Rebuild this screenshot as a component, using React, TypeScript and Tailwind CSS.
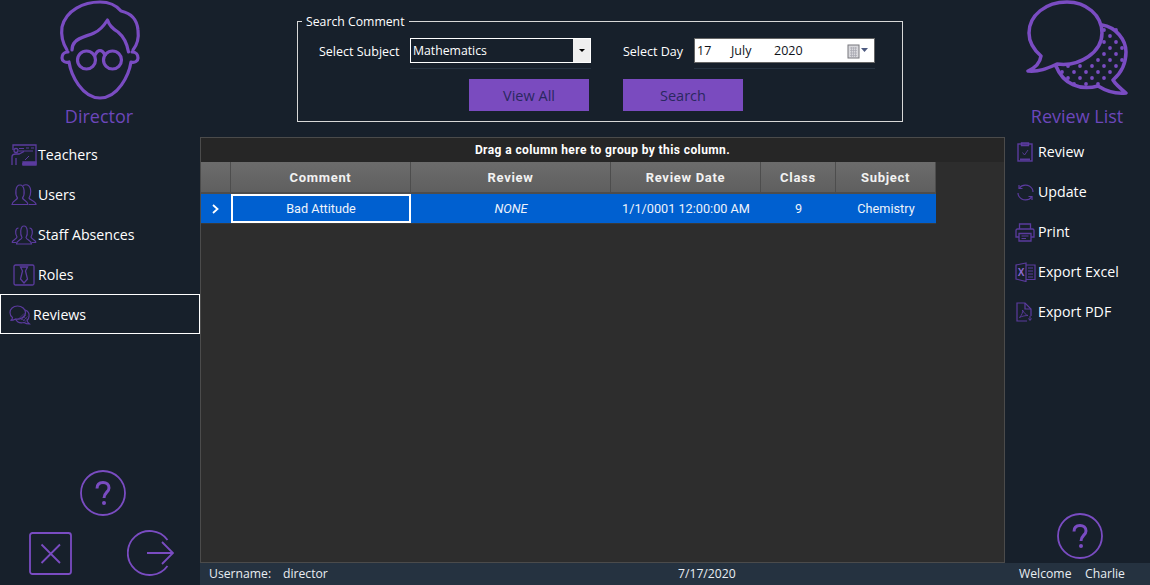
const purple = "#7a4cc2";
const dim = "#5b3b9e";

const leftItems = [
  { label: "Teachers", icon: <TeacherIcon /> },
  { label: "Users", icon: <UsersIcon /> },
  { label: "Staff Absences", icon: <StaffIcon /> },
  { label: "Roles", icon: <RolesIcon /> },
];

const rightItems = [
  { label: "Review", icon: <ClipboardIcon /> },
  { label: "Update", icon: <UpdateIcon /> },
  { label: "Print", icon: <PrintIcon /> },
  { label: "Export Excel", icon: <ExcelIcon /> },
  { label: "Export PDF", icon: <PdfIcon /> },
];

const columns = [
  { label: "Comment", width: "w-[180px]" },
  { label: "Review", width: "w-[200px]" },
  { label: "Review Date", width: "w-[150px]" },
  { label: "Class", width: "w-[75px]" },
  { label: "Subject", width: "w-[100px]" },
];

function DirectorIcon() {
  return (
    <svg width="90" height="102" viewBox="55 0 90 102" fill="none" stroke={purple} strokeWidth="3.200" strokeLinecap="round" strokeLinejoin="round">
      <path d="M67 50C62 42 61 34 62 27C66 10 84 2 100 2C108 2 116 5 121 11C130 13 137 19 138 30C139 38 137 45 133 50" />
      <path d="M72 50C72 46 73 44 75 42C79 37 88 36 94 33C99 31 103 27 107.500 20C109 25 113 29 118 32C124 37 127 43 128.500 52" />
      <path d="M68 52C63 52 62 56 62 58C62 61 65 63 69 62C71 75 82 98 100 98C118 98 129 75 131 62C135 63 138 61 138 58C138 55 136 52 132 52" />
      <circle cx="86.500" cy="60" r="9" />
      <circle cx="112.500" cy="60" r="9" />
      <path d="M95 55C98 49 102 49 105 55" />
    </svg>
  );
}

function BubblesIcon() {
  const dots: [number, number][] = [];
  for (let row = 0; row < 10; row++) {
    for (let col = 0; col < 8; col++) {
      const x = 56 + col * 12 + (row % 2 ? 6 : 0);
      const y = 30 + row * 6;
      const inBack = (x - 88) * (x - 88) + (y - 52) * (y - 52) < 37 * 37;
      const inFront = ((x - 65.5) / 38) ** 2 + ((y - 33) / 33) ** 2 < 1;
      if (inBack && !inFront) dots.push([x, y]);
    }
  }
  return (
    <svg width="102" height="96" viewBox="26 0 102 96" fill="none" stroke={purple} strokeWidth="3.500" strokeLinecap="round" strokeLinejoin="round">
      {dots.map(([x, y], i) => (
        <circle key={i} cx={x} cy={y} r="1.900" fill={purple} stroke="none" />
      ))}
      <path d="M67 2C46 2 29 15 29 33C29 42 33 49 41 56C40 63 35 68 28 71C40 72 48 68 57 64C80 67 102 52 102 33C102 15 86 2 67 2Z" />
      <path d="M102 25C116 27 126 40 126 52C126 64 120 74 113 80C116 85 121 89 126 93C117 94 106 91 98 86C80 91 63 84 56 66" />
    </svg>
  );
}

function TeacherIcon() {
  return (
    <svg width="26" height="22" viewBox="0 0 26 22" fill="none" stroke={dim} strokeWidth="1.300">
      <path d="M2 6V1H25V20H11" />
      <circle cx="5" cy="6.500" r="2" />
      <path d="M1 21V13C1 11 3 10 5 10H8L13 7.500M5 14V21" />
      <path d="M8 4.500H13M15 4H18M20 4H23M8 7H22" strokeWidth="1" />
      <path d="M12 18H25V21H12Z" fill={dim} />
      <path d="M14 16L18 12" strokeWidth="1" />
    </svg>
  );
}

function UsersIcon() {
  return (
    <svg width="26" height="22" viewBox="0 0 26 22" fill="none" stroke={dim} strokeWidth="1.200">
      <path d="M1 20.500H17C17 17 12 16 11.500 14C14 11 14 1 9 1C4 1 4 11 6.500 14C6 16 1 17 1 20.500Z" />
      <path d="M12 1.500C14 0.500 15 0.500 16.500 1C21 3 20 11 18 14C18.500 16 25 17 25 20.500H18" />
    </svg>
  );
}

function StaffIcon() {
  return (
    <svg width="26" height="20" viewBox="0 0 26 20" fill="none" stroke={dim} strokeWidth="1.200">
      <path d="M1 17.500C1 15 6 14 6 12C4 9 4 3 7.500 3M25 17.500C25 15 20 14 20 12C22 9 22 3 18.500 3" />
      <path d="M5.500 19H20.500C20.500 15.500 15.500 15 15 12.500C17 10 17 1 13 1C9 1 9 10 11 12.500C10.500 15 5.500 15.500 5.500 19Z" />
      <path d="M1 17.500H5M21 17.500H25" />
    </svg>
  );
}

function RolesIcon() {
  return (
    <svg width="22" height="22" viewBox="0 0 22 22" fill="none" stroke={dim} strokeWidth="1.300">
      <rect x="1" y="1" width="20" height="20" rx="1.500" />
      <path d="M7.500 3H14.500L12.500 7L14.500 15L11 19L7.500 15L9.500 7Z" />
    </svg>
  );
}

function ReviewsIcon() {
  return (
    <svg width="22" height="20" viewBox="0 0 22 20" fill="none" stroke={dim} strokeWidth="1.200">
      <path d="M8.500 1C4 1 1 4 1 7.500C1 10 2 11.500 3.500 12.500C3.500 14 2.500 15 1.500 15.500C3.500 15.500 5 15 6.500 14C11 15 16.500 12 16.500 7.500C16.500 4 13 1 8.500 1Z" />
      <path d="M16 5C19 6 20.500 8.500 20 11.500C20 13 19 14.500 18 15.500C18 17 19.500 18 20.500 19C18 19 16.500 18.500 15 17.500C11 18.500 8 17 6.500 14" />
      <path d="M9 14.500L15 8.500M12 15L17 10M14 16L18.500 11.500M11 13L17 16.500M14 11.500L19 15" strokeWidth="0.600" />
    </svg>
  );
}

function ClipboardIcon() {
  return (
    <svg width="16" height="20" viewBox="0 0 16 20" fill="none" stroke={dim} strokeWidth="1.400">
      <rect x="1" y="2" width="14" height="17" />
      <path d="M4.500 1H11.500V3.500H4.500Z" />
      <path d="M3 17.500H13" strokeWidth="2" />
      <path d="M5.500 10.500L7.500 13L11 8" strokeWidth="0.900" />
    </svg>
  );
}

function UpdateIcon() {
  return (
    <svg width="17" height="17" viewBox="0 0 17 17" fill="none" stroke={dim} strokeWidth="1.200">
      <path d="M2.500 4C5 0 12 0 15 4.500C16 6 16 7 16 8" />
      <path d="M14.500 13C12 17 5 17 2 12.500C1 11 1 10 1 9" />
      <path d="M2 1V4.500H5.500M15 16V12.500H11.500" />
    </svg>
  );
}

function PrintIcon() {
  return (
    <svg width="20" height="19" viewBox="0 0 20 19" fill="none" stroke={dim} strokeWidth="1.300">
      <path d="M4.500 6V1H15.500V6" />
      <path d="M4 14H1V7.500C1 6.500 1.500 6 2.500 6H17.500C18.500 6 19 6.500 19 7.500V14H16" />
      <path d="M4 10.500H16V18H4Z" />
      <path d="M6.500 13H13.500M6.500 15.500H11" strokeWidth="1" />
    </svg>
  );
}

function ExcelIcon() {
  return (
    <svg width="21" height="20" viewBox="0 0 21 20" fill="none" stroke={dim} strokeWidth="1.200">
      <path d="M11 1L1 3V17L11 19.500Z" />
      <path d="M11 3H20V17.500H11M13 6H18M13 9H18M13 12H18M13 15H18" />
      <text x="2.800" y="14" fontSize="10" fontWeight="700" fill="#8d6ad0" stroke="none" fontFamily="'Liberation Sans', sans-serif">X</text>
    </svg>
  );
}

function PdfIcon() {
  return (
    <svg width="18" height="20" viewBox="0 0 18 20" fill="none" stroke={dim} strokeWidth="1.200">
      <path d="M11 19H1V1H9L15 7V14" />
      <path d="M9 1V7H15" />
      <path d="M3.500 15.500C6 13 7 10 6.500 8C8 11 10 13 12 13.500C9.500 13.500 6.500 14 3.500 15.500Z" strokeWidth="0.900" />
      <path d="M14 14V18M12.500 16.500L14 18.500L15.500 16.500" strokeWidth="1" />
    </svg>
  );
}

function HelpIcon() {
  return (
    <svg width="46" height="46" viewBox="0 0 46 46" fill="none" stroke={purple} strokeWidth="1.800">
      <circle cx="23" cy="23" r="22" />
      <path d="M17 18.500C17 14.500 19.500 12.500 23 12.500C26.500 12.500 29 14.500 29 18C29 22 24 22.500 24 28" strokeWidth="3" />
      <circle cx="24" cy="33" r="2" fill={purple} stroke="none" />
    </svg>
  );
}

function CloseIcon() {
  return (
    <svg width="43" height="43" viewBox="0 0 43 43" fill="none" stroke={purple} strokeWidth="1.800">
      <rect x="1" y="1" width="41" height="41" rx="2.500" />
      <path d="M12.500 12.500L31 31M31 12.500L12.500 31" />
    </svg>
  );
}

function ExitIcon() {
  return (
    <svg width="47" height="46" viewBox="0 0 47 46" fill="none" stroke={purple} strokeWidth="1.800">
      <path d="M40.500 10A22 22 0 1 0 40.500 36" />
      <path d="M20 23H46M35 12L46 23L35 34" />
    </svg>
  );
}

function NavRow({ icon, label, className }: { icon: React.ReactNode; label: string; className: string }) {
  return (
    <div className={`flex h-10 items-center text-[14.200px] text-white ${className}`}>
      <span className="flex w-[28px] shrink-0 justify-center">{icon}</span>
      <span>{label}</span>
    </div>
  );
}

export default function App() {
  return (
    <div className="flex h-[585px] w-[1150px] overflow-hidden bg-[#17202b] font-['Open_Sans','Noto_Sans',sans-serif] text-white">
      {/* left menu */}
      <aside className="flex w-[200px] shrink-0 flex-col">
        <div className="flex h-[135px] flex-col items-center">
          <DirectorIcon />
          <div className="mt-px -ml-[2px] text-[18px] leading-[26px] text-[#6c47bb]">Director</div>
        </div>
        {leftItems.map((item) => (
          <NavRow key={item.label} icon={item.icon} label={item.label} className="pl-[10px]" />
        ))}
        <div className="-mt-px flex h-10 items-center border border-white pt-px pl-[8px] text-[14.200px]">
          <span className="w-[24px] shrink-0"><ReviewsIcon /></span>
          <span>Reviews</span>
        </div>
        <div className="mt-auto mb-[9px] flex flex-col">
          <div className="ml-[80px]"><HelpIcon /></div>
          <div className="mt-[14px] flex items-center pl-[29px]">
            <CloseIcon />
            <div className="ml-[55px]"><ExitIcon /></div>
          </div>
        </div>
      </aside>

      <div className="flex w-[950px] flex-col">
        <div className="flex h-[563px]">
          {/* search + grid */}
          <main className="flex w-[805px] shrink-0 flex-col">
            <div className="h-[137px] pt-[21px] pl-[97px]">
              <div className="relative h-[101px] w-[606px] border border-[#d8d8d8] text-[12.500px]">
                <span className="absolute -top-[9px] left-[4px] bg-[#17202b] px-[4px] text-[12.250px] leading-[17px]">Search Comment</span>
                <div className="flex pt-[16px] pl-[21px]">
                  <div className="w-[91px] pt-[5px] leading-[18px]">Select Subject</div>
                  <div className="w-[181px]">
                    <div className="flex h-[25px] border border-white">
                      <span className="flex-1 pl-[2px] text-[12.250px] leading-[23px]">Mathematics</span>
                      <span className="flex w-[17px] items-center justify-center bg-[#efefef]">
                        <span className="h-0 w-0 border-x-[3px] border-t-[3px] border-x-transparent border-t-black" />
                      </span>
                    </div>
                    <div className="mt-[5px] h-px bg-[#253240]" />
                  </div>
                  <div className="ml-[32px] w-[71px] pt-[5px] leading-[18px]">Select Day</div>
                  <div className="w-[181px]">
                    <div className="flex h-[25px] items-center border border-[#666666] bg-white pt-px pl-[2px] text-[#10131a]">
                      <span className="w-[34px]">17</span>
                      <span className="w-[43px]">July</span>
                      <span className="w-[73px]">2020</span>
                      <svg width="22" height="15" viewBox="0 0 22 15">
                        <rect x="1" y="1" width="11" height="13" fill="#d8d8dc" stroke="#77777c" />
                        <path d="M3 4H10M3 6.500H10M3 9H10M3 11.500H10M4.500 3V13M6.500 3V13M8.500 3V13" stroke="#a8a8b0" strokeWidth="0.700" />
                        <path d="M14 4H21L17.500 8Z" fill="#4d5a80" />
                      </svg>
                    </div>
                    <div className="mt-[5px] h-px bg-[#253240]" />
                  </div>
                </div>
                <div className="mt-[10px] flex pl-[171px]">
                  <button className="h-8 w-[120px] bg-[#7a4bbf] pt-px text-[14.500px] text-[#2a2860]">View All</button>
                  <button className="ml-[34px] h-8 w-[120px] bg-[#7a4bbf] pt-px text-[14.500px] text-[#2a2860]">Search</button>
                </div>
              </div>
            </div>

            <div className="flex min-h-0 flex-1 flex-col border border-[#4b4b4b] bg-[#2d2d2d] font-['Roboto',sans-serif]">
              <div className="h-[24px] bg-[#262626] text-center text-[12px] leading-[24px] font-bold tracking-[0.4px]">
                Drag a column here to group by this column.
              </div>
              <div className="flex h-[32px]">
                <div className="w-[30px] border-r border-b-2 border-[#4d4d4d] bg-linear-to-b from-[#6c6c6c] to-[#5f5f5f]" />
                {columns.map((col) => (
                  <div
                    key={col.label}
                    className={`${col.width} border-r border-b-2 border-[#4d4d4d] bg-linear-to-b from-[#6c6c6c] to-[#5f5f5f] text-center text-[13px] leading-[32px] font-bold tracking-[0.7px] text-[#f2f2f2]`}
                  >
                    {col.label}
                  </div>
                ))}
              </div>
              <div className="flex h-[30px] w-[735px] border-b border-[#3a3a3a] bg-[#0060d0] text-center text-[12.700px] leading-[29px] text-[#eef3fb]">
                <div className="flex w-[30px] items-center justify-center pr-[2px]">
                  <svg width="9" height="10" viewBox="0 0 9 10" fill="none" stroke="white" strokeWidth="1.800">
                    <path d="M2 1L6.500 5L2 9" />
                  </svg>
                </div>
                <div className="w-[180px] border-2 border-white leading-[25px]">Bad Attitude</div>
                <div className="w-[200px] italic">NONE</div>
                <div className="w-[150px]">1/1/0001 12:00:00 AM</div>
                <div className="w-[75px]">9</div>
                <div className="w-[100px]">Chemistry</div>
              </div>
            </div>
          </main>

          {/* right menu */}
          <aside className="flex flex-1 flex-col">
            <div className="flex h-[132px] flex-col items-center">
              <div className="-ml-[1px]"><BubblesIcon /></div>
              <div className="mt-[7px] -ml-[1px] text-[18px] leading-[26px] text-[#6c47bb]">Review List</div>
            </div>
            {rightItems.map((item) => (
              <NavRow key={item.label} icon={item.icon} label={item.label} className="pl-[7px] [&>span:first-child]:w-[26px]" />
            ))}
            <div className="mt-auto mb-[4px] ml-[52px]"><HelpIcon /></div>
          </aside>
        </div>

        {/* status bar */}
        <footer className="flex h-[22px] items-center bg-[#253240] pl-[9px] text-[12.200px] text-[#e8edf2]">
          <span className="w-[74px]">Username:</span>
          <span className="w-[395px]">director</span>
          <span className="w-[341px]">7/17/2020</span>
          <span className="w-[66px]">Welcome</span>
          <span>Charlie</span>
        </footer>
      </div>
    </div>
  );
}
